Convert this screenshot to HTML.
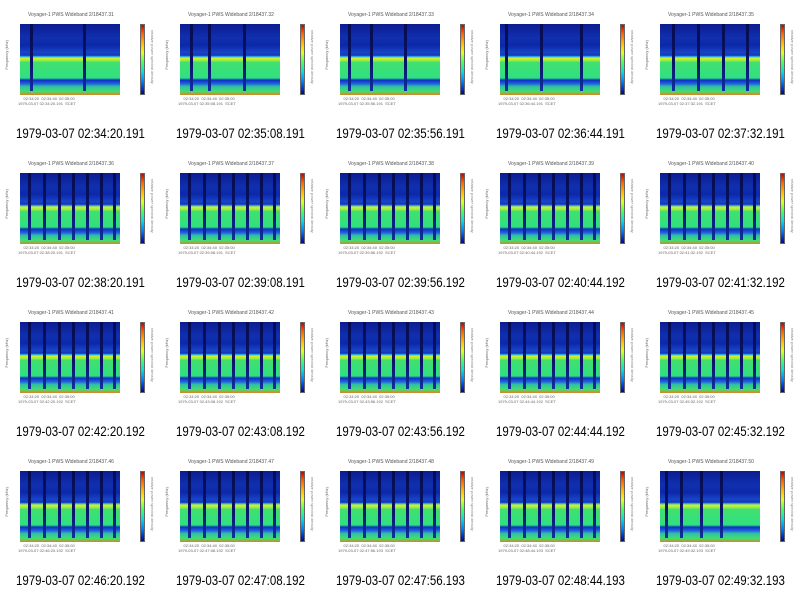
<!DOCTYPE html><html><head><style>
body{margin:0;width:800px;height:596px;background:#fff;position:relative;overflow:hidden;font-family:"Liberation Sans",sans-serif}
.c{position:absolute;width:160px;height:149px}
.t{position:absolute;left:28px;top:12px;font-size:5px;color:#555;white-space:nowrap}
.p{position:absolute;left:20px;top:24px;width:100px;height:71px;overflow:hidden;
background:linear-gradient(to bottom,#0c1c90 0%,#1030b0 20%,#0c28a8 30%,#1a44c8 40%,#1038b8 44%,#30b0f0 46%,#d8f020 48%,#a0f040 51%,#40e070 54%,#30e080 76%,#1030c0 79%,#2060e0 84%,#30c0a0 88%,#40e070 95%,#e08020 100%)}
.v{position:absolute;top:0;height:94%;width:3px;background:linear-gradient(to bottom,#060c50,#0a1468 60%,#1030a0)}
.b{position:absolute;left:140px;top:24px;width:5px;height:71px;background:linear-gradient(to bottom,#d00000,#ff6000 12%,#ffc000 28%,#e0ff20 40%,#40ff60 55%,#00e0e0 68%,#0080ff 82%,#0000a0);border:1px solid #666;box-sizing:border-box}
.x{position:absolute;left:18px;top:96px;font-size:4px;color:#666;white-space:nowrap;line-height:5px}
.y{position:absolute;left:4px;top:40px;font-size:4px;color:#666;writing-mode:vertical-rl;transform:rotate(180deg)}
.k{position:absolute;left:150px;top:30px;font-size:4px;color:#888;writing-mode:vertical-rl;height:60px}
.cap{position:absolute;left:16px;top:125px;width:160px;font-size:14px;color:#000;white-space:nowrap;transform:scaleX(0.82);transform-origin:0 0}
</style></head><body>
<script>
var caps=["02:34:20.191","02:35:08.191","02:35:56.191","02:36:44.191","02:37:32.191","02:38:20.191","02:39:08.191","02:39:56.192","02:40:44.192","02:41:32.192","02:42:20.192","02:43:08.192","02:43:56.192","02:44:44.192","02:45:32.192","02:46:20.192","02:47:08.192","02:47:56.193","02:48:44.193","02:49:32.193"];
var lines=[[10,63],[10,28,63],[8,30,64],[5,40,80],[12,37,62,86],
[8,23,38,52,66,80,93],[8,23,38,52,66,80,93],[8,23,38,52,66,80,93],[8,23,38,52,66,80,93],[8,23,38,52,66,80,93],
[8,23,38,52,66,80,93],[8,23,38,52,66,80,93],[8,23,38,52,66,80,93],[8,23,38,52,66,80,93],[8,23,38,52,66,80,93],
[8,23,38,52,66,80,93],[8,23,38,52,66,80,93],[8,23,38,52,66,80,93],[8,23,38,52,66,80,93],[5,20,40,60]];
var h="";
for(var i=0;i<20;i++){var c=i%5,r=Math.floor(i/5);
var l="";lines[i].forEach(function(x){l+='<div class="v" style="left:'+x+'px"></div>'});
h+='<div class="c" style="left:'+(c*160)+'px;top:'+(r*149)+'px"><div class="t">Voyager-1 PWS Wideband 2/18437.'+(31+i)+'</div><div class="y">Frequency (kHz)</div><div class="p">'+l+'</div><div class="b"></div><div class="k">relative power spectral density</div><div class="x">&nbsp;&nbsp;&nbsp;&nbsp;&nbsp;02:34:20 &nbsp;02:34:40 &nbsp;02:35:00<br>1979-03-07 '+caps[i]+' &nbsp;SCET</div><div class="cap">1979-03-07 '+caps[i]+'</div></div>';}
document.write(h);
</script>
</body></html>
